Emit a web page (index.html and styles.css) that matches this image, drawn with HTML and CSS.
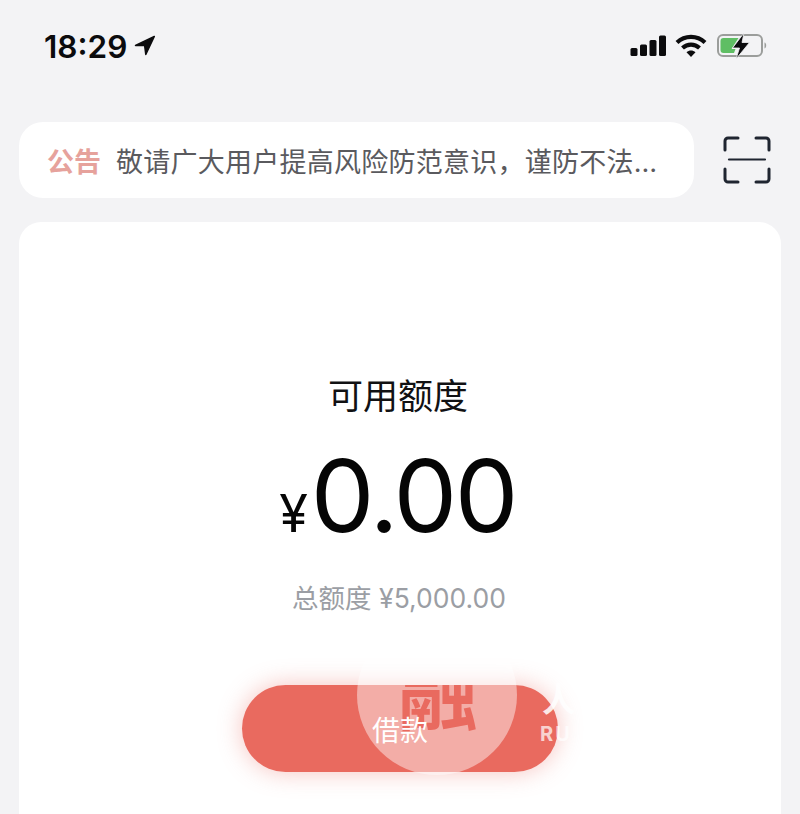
FILE: index.html
```html
<!DOCTYPE html>
<html lang="zh-CN">
<head>
  <meta charset="UTF-8" />
  <meta name="viewport" content="width=device-width, initial-scale=1.0" />
  <title>可用额度</title>
  <link rel="stylesheet" href="styles.css">
</head>
<body>
  <div class="status-bar">
    <div class="status-left">
      <span class="time">18:29</span>
      <svg class="location" width="22" height="22" viewBox="0 0 22 22"><path d="M20.300 1.500 1.500 10.400h9.100l1.200 9z" fill="#0b0b0d" stroke="#0b0b0d" stroke-width="1.500" stroke-linejoin="round"/></svg>
    </div>
    <div class="status-right">
      <svg width="36" height="22" viewBox="0 0 36 22">
        <rect x="0.500" y="13" width="7" height="8" rx="1.500" fill="#0b0b0d"/>
        <rect x="10" y="9.500" width="7" height="11.500" rx="1.500" fill="#0b0b0d"/>
        <rect x="19.500" y="5" width="7" height="16" rx="1.500" fill="#0b0b0d"/>
        <rect x="29" y="0.500" width="7" height="20.500" rx="1.500" fill="#0b0b0d"/>
      </svg>
      <svg width="32" height="24" viewBox="0 0 32 24">
        <path d="M2 8.500C10 1 22 1 30 8.500" fill="none" stroke="#0b0b0d" stroke-width="4.200"/>
        <path d="M7.500 14c5-4.600 12-4.600 17 0" fill="none" stroke="#0b0b0d" stroke-width="4.200"/>
        <path d="M11.500 18.200c2.700-2.300 6.300-2.300 9 0L16 23z" fill="#0b0b0d"/>
      </svg>
      <svg width="52" height="26" viewBox="0 0 52 26">
        <rect x="2" y="2" width="44" height="21" rx="5" fill="none" stroke="#9b9d9b" stroke-width="2"/>
        <path d="M4.500 8a3 3 0 0 1 3-3h15l-7 11h4l-1.500 4H7.500a3 3 0 0 1-3-3z" fill="#5fbe64"/>
        <path d="M48.500 9.500c2 .5 2.500 5 0 6z" fill="#9b9d9b"/>
        <path d="M28 0 16.500 15h7L20 26 33.500 9.500h-7.500z" fill="#0b0b0d" stroke="#f3f3f5" stroke-width="0.800"/>
      </svg>
    </div>
  </div>

  <div class="top-row">
    <div class="notice">
      <span class="notice-tag">公告</span>
      <span class="notice-text">敬请广大用户提高风险防范意识，谨防不法…</span>
    </div>
    <svg class="scan" width="48" height="48" viewBox="0 0 48 48" fill="none" stroke="#1f2530" stroke-width="3" stroke-linecap="round" stroke-linejoin="round">
      <path d="M2 14V5a3 3 0 0 1 3-3h10"/>
      <path d="M33 2h10a3 3 0 0 1 3 3v9"/>
      <path d="M2 33v10a3 3 0 0 0 3 3h10"/>
      <path d="M33 46h10a3 3 0 0 0 3-3V33"/>
      <path d="M6 23.500h36" stroke-width="2.200"/>
    </svg>
  </div>

  <div class="card">
    <div class="card-title">可用额度</div>
    <div class="amount"><span class="currency">¥</span>0.00</div>
    <div class="total">总额度 ¥5,000.00</div>
    <div class="action">
      <button class="borrow"><span class="borrow-label">借款</span></button>
      <!-- watermark that sits over the button -->
      <div class="stamp"></div>
      <span class="stamp-char">融</span>
      <span class="stamp-side">人</span>
      <span class="stamp-latin">RU</span>
    </div>
  </div>
</body>
</html>
```

FILE: styles.css
```css
* {
  box-sizing: border-box;
}

html,
body {
  margin: 0;
  height: 814px;
  overflow: hidden;
}

body {
  font-family: 'Inter', 'Noto Sans CJK SC', sans-serif;
  background-color: #f3f3f5;
  color: #0b0b0d;
}

.status-bar {
  display: flex;
  justify-content: space-between;
  align-items: center;
  height: 92px;
  padding: 0 32px 0 44px;
}

.status-left {
  display: flex;
  align-items: center;
  gap: 7px;
}

.time {
  font-size: 31.500px;
  font-weight: 600;
}

.status-right {
  display: flex;
  align-items: center;
  gap: 9px;
}

.top-row {
  display: flex;
  align-items: center;
  justify-content: space-between;
  padding: 0 29px 0 19px;
  margin-top: 30px;
}

.notice {
  display: flex;
  align-items: center;
  gap: 15px;
  width: 675px;
  height: 76px;
  padding-left: 28px;
  background: #ffffff;
  border-radius: 24px;
  font-size: 27px;
  white-space: nowrap;
}

.notice-tag {
  color: #e6a29c;
  font-weight: 700;
}

.notice-text {
  color: #5a5a5e;
  letter-spacing: 0.250px;
}

.card {
  margin: 24px 19px 0;
  height: 592px;
  padding-top: 153px;
  background: #ffffff;
  border-radius: 22px 22px 0 0;
  display: flex;
  flex-direction: column;
  align-items: center;
}

.card-title {
  margin-right: 4px;
  font-size: 35px;
  line-height: 42px;
  color: #111113;
}

.amount {
  margin-top: 23px;
  margin-right: 5px;
  font-size: 101px;
  line-height: 110px;
  font-weight: 400;
  letter-spacing: -2.500px;
  color: #050505;
}

.currency {
  font-size: 52px;
  letter-spacing: 0;
  margin-right: 3px;
}

.total {
  margin-top: 12px;
  margin-right: 2px;
  font-size: 26.500px;
  line-height: 34px;
  color: #9b9ea4;
}

.action {
  position: relative;
  margin-top: 70px;
  width: 316px;
  height: 87px;
}

.borrow {
  display: block;
  width: 100%;
  height: 100%;
  border: none;
  border-radius: 44px;
  background-color: #e96a5f;
  box-shadow: 0 0 24px rgba(233, 106, 95, 0.4);
  color: #ffffff;
  font-family: inherit;
  font-size: 28px;
  padding: 0;
  cursor: pointer;
}

.borrow-label {
  position: relative;
  z-index: 2;
}

.stamp {
  position: absolute;
  z-index: 1;
  left: 115px;
  top: -70px;
  width: 160px;
  height: 160px;
  border-radius: 50%;
  background: rgba(255, 255, 255, 0.45);
}

.stamp-char {
  position: absolute;
  z-index: 1;
  left: 156px;
  top: -47px;
  font-size: 80px;
  line-height: 112px;
  font-weight: 700;
  color: #e96a5f;
  clip-path: inset(47px 0 0 0);
}

.stamp-side {
  position: absolute;
  left: 300px;
  top: -5px;
  font-size: 34px;
  line-height: 40px;
  font-weight: 700;
  color: #ffffff;
  opacity: 0.85;
}

.stamp-latin {
  position: absolute;
  left: 298px;
  top: 37px;
  font-size: 20px;
  line-height: 24px;
  font-weight: 700;
  letter-spacing: 2px;
  color: #ffffff;
  opacity: 0.7;
}
```
